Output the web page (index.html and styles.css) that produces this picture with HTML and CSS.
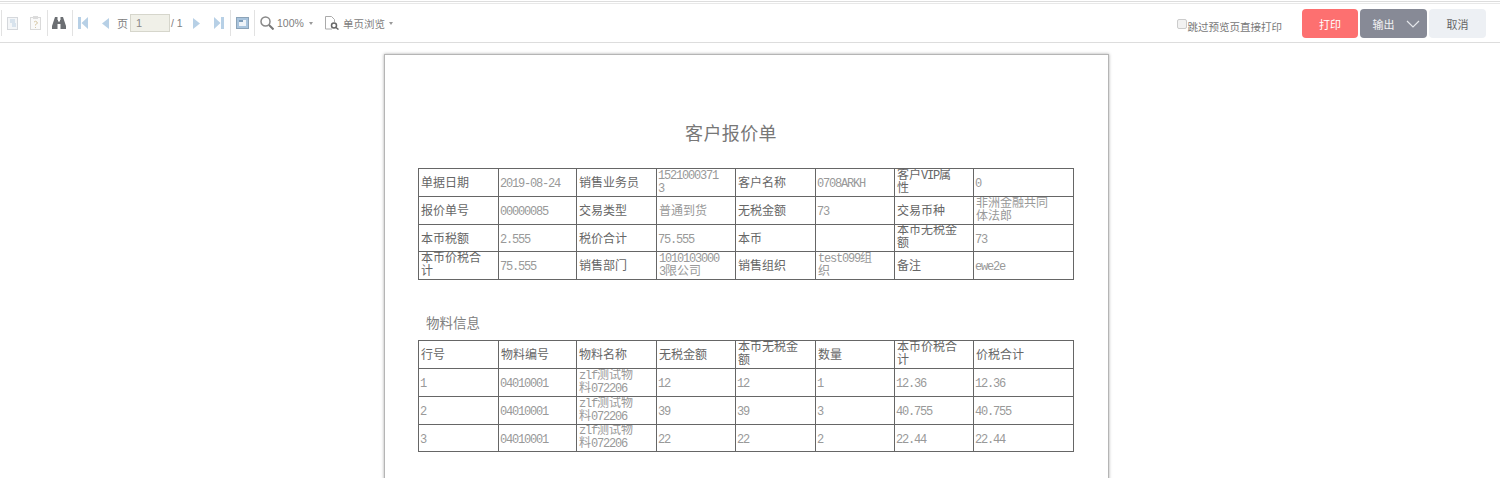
FILE: index.html
```html
<!doctype html>
<html lang="zh-CN">
  <head>
    <meta charset="utf-8">
    <title>客户报价单</title>
    <link rel="stylesheet" href="styles.css">
  </head>
  <body>
    <div class="topline"></div>

    <header class="toolbar">
      <div class="tools">
        <span class="sep sep-first"></span>
        <svg class="icon icon-doc" width="11" height="13" viewBox="0 0 11 13"><rect x=".5" y=".5" width="10" height="12" fill="#f4f6f8" stroke="#d5d8dc"/><path d="M3 3h5M3 5h5M5 7h4M5 9h4" stroke="#bcd0e2"/></svg>
        <svg class="icon icon-clip" width="11" height="14" viewBox="0 0 11 14"><rect x=".5" y="1.5" width="10" height="12" fill="#fafafa" stroke="#dadada"/><rect x="3" y="0" width="5" height="3" fill="#dcdcdc"/><path d="M4 6q1.500-1.500 3 0t-1.500 2.500v1M5.500 11v1" fill="none" stroke="#d8c9a8"/></svg>
        <span class="sep sep-a"></span>
        <svg class="icon icon-find" width="14" height="12" viewBox="0 0 14 12"><path d="M3 0h2.500v3H6v1.500h2V3h.5V0H11l3 9v3H8.500V7h-3v5H0V9z" fill="#6b6e72"/></svg>
        <span class="sep sep-b"></span>
        <svg class="icon icon-first" width="10" height="12" viewBox="0 0 10 12"><path d="M0 0h3v12H0zM10 0v12L3.500 6z" fill="#b7d0e6"/></svg>
        <svg class="icon icon-prev" width="7" height="11" viewBox="0 0 7 11"><path d="M7 0v11L0 5.500z" fill="#b7d0e6"/></svg>
        <span class="page-label">页</span>
        <input class="page-input" type="text" value="1">
        <span class="page-total">/ 1</span>
        <svg class="icon icon-next" width="7" height="11" viewBox="0 0 7 11"><path d="M0 0v11l7-5.500z" fill="#b7d0e6"/></svg>
        <svg class="icon icon-last" width="10" height="12" viewBox="0 0 10 12"><path d="M10 0H7v12h3zM0 0v12l6.500-6z" fill="#b7d0e6"/></svg>
        <span class="sep sep-c"></span>
        <svg class="icon icon-panel" width="13" height="12" viewBox="0 0 13 12"><rect x=".5" y=".5" width="12" height="11" fill="#a9c4dd" stroke="#8ba3b8"/><rect x="3" y="3" width="7" height="6" fill="#eef3f8"/><rect x="3" y="3" width="4" height="2" fill="#7d9cb8"/></svg>
        <span class="sep sep-d"></span>
        <svg class="icon icon-zoom" width="14" height="14" viewBox="0 0 14 14"><circle cx="5.500" cy="5.500" r="4.500" fill="none" stroke="#888" stroke-width="1.500"/><path d="M9 9l4.500 4.500" stroke="#777" stroke-width="2"/></svg>
        <span class="zoom-text">100%</span>
        <span class="caret caret-zoom"></span>
        <svg class="icon icon-view" width="14" height="14" viewBox="0 0 14 14"><path d="M7 13H.5V.5h6l3 3V6" fill="none" stroke="#aaa"/><circle cx="9" cy="9.500" r="2.500" fill="none" stroke="#666" stroke-width="1.500"/><path d="M11 11.500l2.500 2" stroke="#666" stroke-width="1.500"/></svg>
        <span class="view-text">单页浏览</span>
        <span class="caret caret-view"></span>
      </div>

      <div class="actions">
        <label class="skip"><input class="skip-box" type="checkbox">跳过预览页直接打印</label>
        <button class="btn btn-print" type="button">打印</button>
        <button class="btn btn-output" type="button">输出
          <svg width="14" height="8" viewBox="0 0 14 8"><path d="M1 1l6 6 6-6" fill="none" stroke="#e4e6ea" stroke-width="1.200"/></svg>
        </button>
        <button class="btn btn-cancel" type="button">取消</button>
      </div>
    </header>

    <main class="viewer">
      <div class="paper">
        <h1 class="title">客户报价单</h1>

        <table class="sheet">
          <colgroup>
            <col class="w80"><col class="w78"><col class="w80"><col class="w79"><col class="w80"><col class="w79"><col class="w79"><col class="w100">
          </colgroup>
          <tr class="row28">
            <th>单据日期</th><td class="num">2019-08-24</td><th>销售业务员</th><td class="num two">1521000371<br>3</td><th>客户名称</th><td class="num">0708ARKH</td><th class="two">客户<span class="num">VIP</span>属<br>性</th><td class="num">0</td>
          </tr>
          <tr class="row28">
            <th>报价单号</th><td class="num">00000085</td><th>交易类型</th><td>普通到货</td><th>无税金额</th><td class="num">73</td><th>交易币种</th><td class="two">非洲金融共同<br>体法郎</td>
          </tr>
          <tr class="row27">
            <th>本币税额</th><td class="num">2.555</td><th>税价合计</th><td class="num">75.555</td><th>本币</th><td></td><th class="two">本币无税金<br>额</th><td class="num">73</td>
          </tr>
          <tr class="row28">
            <th class="two">本币价税合<br>计</th><td class="num">75.555</td><th>销售部门</th><td class="two"><span class="num">1010103000<br>3</span>限公司</td><th>销售组织</th><td class="two"><span class="num">test099</span>组<br>织</td><th>备注</th><td class="num">ewe2e</td>
          </tr>
        </table>

        <h2 class="subtitle">物料信息</h2>

        <table class="sheet">
          <colgroup>
            <col class="w80"><col class="w78"><col class="w80"><col class="w79"><col class="w80"><col class="w79"><col class="w79"><col class="w100">
          </colgroup>
          <tr class="row28">
            <th>行号</th><th>物料编号</th><th>物料名称</th><th>无税金额</th><th class="two">本币无税金<br>额</th><th>数量</th><th class="two">本币价税合<br>计</th><th>价税合计</th>
          </tr>
          <tr class="row28">
            <td class="num">1</td><td class="num">04010001</td><td class="two"><span class="num">zlf</span>测试物<br>料<span class="num">072206</span></td><td class="num">12</td><td class="num">12</td><td class="num">1</td><td class="num">12.36</td><td class="num">12.36</td>
          </tr>
          <tr class="row28">
            <td class="num">2</td><td class="num">04010001</td><td class="two"><span class="num">zlf</span>测试物<br>料<span class="num">072206</span></td><td class="num">39</td><td class="num">39</td><td class="num">3</td><td class="num">40.755</td><td class="num">40.755</td>
          </tr>
          <tr class="row27">
            <td class="num">3</td><td class="num">04010001</td><td class="two"><span class="num">zlf</span>测试物<br>料<span class="num">072206</span></td><td class="num">22</td><td class="num">22</td><td class="num">2</td><td class="num">22.44</td><td class="num">22.44</td>
          </tr>
        </table>
      </div>
    </main>
  </body>
</html>
```

FILE: styles.css
```css
* {
  margin: 0;
  padding: 0;
  box-sizing: border-box;
}

html, body {
  height: 478px;
  overflow: hidden;
}

body {
  background: #fff;
  font-family: "Liberation Sans", "Noto Sans CJK SC", sans-serif;
  font-size: 10.500px;
  color: #808080;
}

.topline {
  height: 3px;
  margin-top: 1px;
  border-top: 1px solid #ddd;
  border-bottom: 1px solid #e8e8e8;
}

/* toolbar */
.toolbar {
  display: flex;
  justify-content: space-between;
  height: 39px;
  border-bottom: 1px solid #ddd;
}

.tools {
  display: flex;
  align-items: center;
  height: 38px;
  white-space: nowrap;
}

.icon {
  flex: none;
}

.sep {
  width: 1px;
  height: 26px;
  background: #e2e2e2;
}

.sep-first { margin-left: 1px; }
.icon-doc { margin-left: 5px; }
.icon-clip { margin-left: 12px; }
.sep-a { margin-left: 6px; }
.icon-find { margin-left: 4px; }
.sep-b { margin-left: 6px; }
.icon-first { margin-left: 5px; }
.icon-prev { margin-left: 14px; }

.page-label {
  margin-left: 8px;
  width: 13px;
  font-size: 11px;
}

.page-input {
  width: 40px;
  height: 18px;
  padding-left: 5px;
  border: 1px solid #d6d6cc;
  background: #f0f0e8;
  font-family: inherit;
  font-size: 11px;
  color: #888;
}

.page-total {
  width: 23px;
  padding-left: 1px;
}

.icon-last { margin-left: 14px; }
.sep-c { margin-left: 6px; }
.icon-panel { margin-left: 5px; }
.sep-d { margin-left: 5px; }
.icon-zoom { margin-left: 5px; }

.zoom-text {
  margin-left: 3px;
  width: 26px;
}

.caret {
  width: 0;
  height: 0;
  border-left: 2.500px solid transparent;
  border-right: 2.500px solid transparent;
  border-top: 3px solid #999;
}

.caret-zoom { margin-left: 6px; }
.icon-view { margin-left: 12px; }

.view-text {
  margin-left: 4px;
  width: 43px;
}

.caret-view { margin-left: 3px; }

.actions {
  display: flex;
  align-items: flex-start;
  padding: 5px 14px 0 0;
  gap: 2px;
}

.skip {
  display: flex;
  align-items: flex-start;
  margin-right: 18px;
  padding-top: 11px;
  font-size: 10.500px;
  line-height: 14px;
  color: #777;
}

.skip-box {
  width: 10px;
  height: 10px;
  margin: -1px 1px 0 -1px;
  appearance: none;
  border: 1px solid #ccc;
  border-radius: 2px;
  background: #f2f2f2;
}

.btn {
  display: flex;
  align-items: center;
  justify-content: center;
  height: 29px;
  border: 0;
  border-radius: 4px;
  font-family: inherit;
  font-size: 11px;
}

.btn-print {
  width: 56px;
  background: #fd7070;
  color: #fff;
}

.btn-output {
  width: 67px;
  gap: 11px;
  padding-left: 5px;
  background: #878a96;
  color: #f2f2f4;
}

.btn-cancel {
  width: 57px;
  background: #edf0f4;
  color: #666;
}

/* report page */
.viewer {
  display: flex;
  justify-content: center;
  padding: 11px 7px 0 0;
}

.paper {
  width: 725px;
  height: 600px;
  padding: 67px 0 0 33px;
  border: 1px solid #b5b5b5;
  box-shadow: 0 0 3px #aaa;
  background: #fff;
}

.title {
  width: 626px;
  font-size: 18px;
  font-weight: normal;
  line-height: 24px;
  letter-spacing: .4px;
  text-align: center;
  color: #777;
}

.subtitle {
  height: 20px;
  margin: 34px 0 6px 8px;
  font-size: 13.500px;
  font-weight: normal;
  line-height: 20px;
  color: #808080;
}

/* mono first so mixed cells keep one line height */
.sheet {
  width: 656px;
  margin-top: 22px;
  border-collapse: collapse;
  table-layout: fixed;
  font-family: "Liberation Mono", "Noto Sans CJK SC", monospace;
  font-size: 12px;
  line-height: 13px;
}

.subtitle + .sheet {
  margin-top: 0;
}

.sheet th, .sheet td {
  padding: 4px 0 0 2px;
  border: 1px solid #666;
  text-align: left;
  vertical-align: middle;
  overflow: hidden;
  white-space: nowrap;
}

.sheet th {
  font-weight: normal;
  color: #666;
}

.sheet td {
  color: #999;
}

.sheet td.num {
  padding-left: 1px;
}

/* two lines only just fit the row */
.sheet .two {
  padding-top: 1px;
}

.sheet .row27 .two {
  padding-top: 0;
}

/* half width latin, like the report's font */
.num {
  letter-spacing: -1.200px;
}

.row28 { height: 28px; }
.row27 { height: 27px; }

.w78 { width: 78px; }
.w79 { width: 79px; }
.w80 { width: 80px; }
.w100 { width: 100px; }
```
